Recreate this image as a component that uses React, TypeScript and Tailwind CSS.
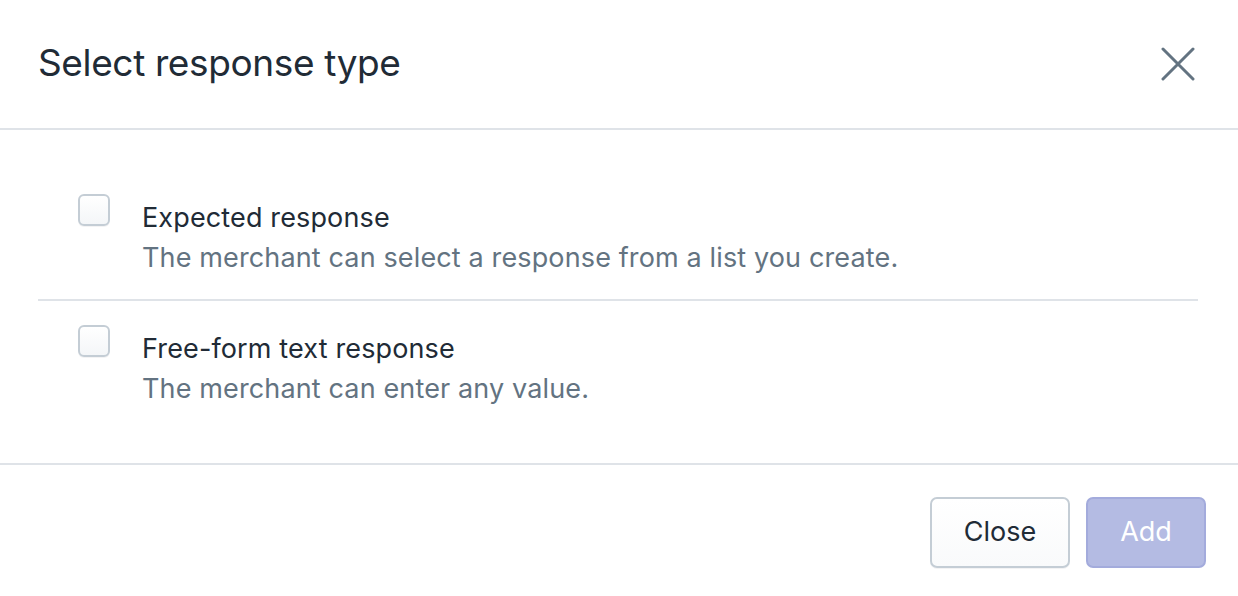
import { useState } from "react";

type Option = {
  id: string;
  label: string;
  help: string;
};

const options: Option[] = [
  {
    id: "expected",
    label: "Expected response",
    help: "The merchant can select a response from a list you create.",
  },
  {
    id: "free",
    label: "Free-form text response",
    help: "The merchant can enter any value.",
  },
];

export default function App() {
  const [checked, setChecked] = useState<Record<string, boolean>>({});

  return (
    <div className="h-[596px] w-[1238px] bg-white text-[#212b36] font-['Inter','Noto_Sans',sans-serif] flex flex-col">
      {/* header */}
      <div className="h-[130px] shrink-0 flex items-center justify-between pl-[38px] pr-[42px] border-b-2 border-[#dfe3e8]">
        <h2 className="text-[37px] leading-[48px] font-normal tracking-[-0.01em] -mt-[3px]">
          Select response type
        </h2>
        <button className="h-[36px] w-[36px] grid place-items-center text-[#637381]">
          <svg width="34" height="34" viewBox="0 0 34 34" fill="none">
            <path
              d="M2 2L32 32M32 2L2 32"
              stroke="currentColor"
              strokeWidth="3"
              strokeLinecap="round"
            />
          </svg>
        </button>
      </div>

      {/* body */}
      <div className="flex-1 pt-[64px] pl-[38px] pr-[40px]">
        {options.map((o, i) => {
          const on = !!checked[o.id];
          return (
            <div
              key={o.id}
              className={[
                "flex pl-[40px]",
                i === 0 ? "pb-[21px] border-b-2 border-[#dfe3e8]" : "pt-[24px]",
              ].join(" ")}
            >
              <button
                onClick={() => setChecked({ ...checked, [o.id]: !on })}
                className={[
                  "h-[32px] w-[32px] shrink-0 rounded-[6px] border-2 border-[#c4cdd5] bg-gradient-to-b from-white to-[#f4f6f8] shadow-[0_1px_0_rgba(22,29,37,0.05)]",
                  on ? "bg-[#5c6ac4] border-[#5c6ac4]" : "",
                ].join(" ")}
              />
              <div className="pl-[32px] pt-[4px]">
                <div className="text-[27px] leading-[40px] tracking-[0.005em]">{o.label}</div>
                <div className="text-[27px] leading-[40px] text-[#637381] tracking-[0.005em]">
                  {o.help}
                </div>
              </div>
            </div>
          );
        })}
      </div>

      {/* footer */}
      <div className="h-[133px] shrink-0 border-t-2 border-[#dfe3e8] flex justify-end items-start pt-[32px] pr-[32px] gap-[16px]">
        <button className="h-[71px] w-[140px] rounded-[7px] border-2 border-[#c4cdd5] bg-gradient-to-b from-white to-[#f9fafb] text-[27px] text-[#212b36] shadow-[0_1px_0_rgba(22,29,37,0.05)]">
          Close
        </button>
        <button
          disabled
          className="h-[71px] w-[120px] rounded-[7px] border-2 border-[#a3abdc] bg-[#b4bbe3] text-[27px] text-white"
        >
          Add
        </button>
      </div>
    </div>
  );
}
